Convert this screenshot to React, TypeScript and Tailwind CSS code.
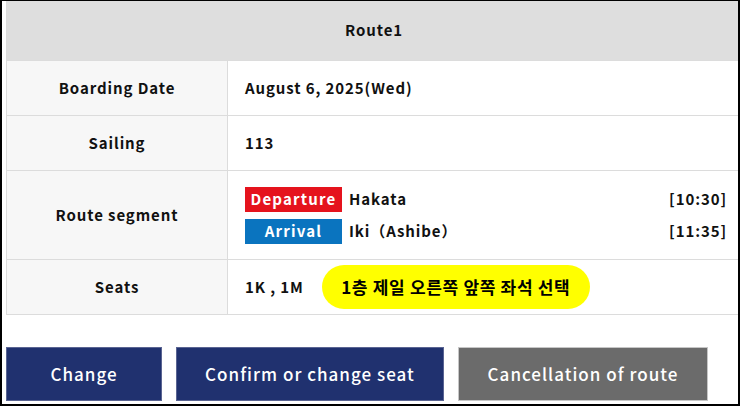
import React from "react";

const rows = [
  { label: "Boarding Date", value: "August 6, 2025(Wed)" },
  { label: "Sailing", value: "113" },
];

function Badge({ text, color }: { text: string; color: string }) {
  return (
    <span
      className={`inline-flex h-[25px] w-[97px] items-center justify-center text-[15px] font-bold tracking-[0.08em] text-white ${color}`}
    >
      {text}
    </span>
  );
}

export default function App() {
  return (
    <div
      className="h-[406px] w-[740px] overflow-hidden border-t border-b-2 border-l-2 border-r-2 border-black bg-white text-[#111]"
      style={{ fontFamily: '"Noto Sans CJK JP", "Noto Sans", sans-serif' }}
    >
      <div className="ml-[4px] w-[736px] border-x border-b border-[#dcdcdc]">
        <div className="flex h-[59px] items-center justify-center bg-[#dedede] text-[15px] font-bold tracking-[0.06em]">
          Route1
        </div>
        {rows.map((r) => (
          <div key={r.label} className="grid h-[55px] grid-cols-[221px_1fr] border-t border-[#dcdcdc]">
            <div className="flex items-center justify-center border-r border-[#dcdcdc] bg-[#f7f7f7] text-[15px] font-bold tracking-[0.06em]">
              {r.label}
            </div>
            <div className="flex items-center pl-[17px] text-[15px] font-bold tracking-[0.06em]">{r.value}</div>
          </div>
        ))}
        <div className="grid h-[89px] grid-cols-[221px_1fr] border-t border-[#dcdcdc]">
          <div className="flex items-center justify-center border-r border-[#dcdcdc] bg-[#f7f7f7] text-[15px] font-bold tracking-[0.06em]">
            Route segment
          </div>
          <div className="flex flex-col justify-center gap-[7px] pl-[17px] pr-[14px] text-[15px] font-bold tracking-[0.06em]">
            <div className="flex items-center gap-[7px]">
              <Badge text="Departure" color="bg-[#e5131d]" />
              <span className="flex-1">Hakata</span>
              <span>[10:30]</span>
            </div>
            <div className="flex items-center gap-[7px]">
              <Badge text="Arrival" color="bg-[#0a74bf]" />
              <span className="flex-1">Iki（Ashibe）</span>
              <span>[11:35]</span>
            </div>
          </div>
        </div>
        <div className="grid h-[55px] grid-cols-[221px_1fr] border-t border-[#dcdcdc]">
          <div className="flex items-center justify-center border-r border-[#dcdcdc] bg-[#f7f7f7] text-[15px] font-bold tracking-[0.06em]">
            Seats
          </div>
          <div className="flex items-center pl-[17px] text-[15px] font-bold tracking-[0.06em]">
            <span>1K , 1M</span>
            <span
              className="ml-[18px] flex h-[44px] w-[268px] items-center justify-center rounded-[22px] bg-[#ffff00] text-[17px] font-bold tracking-[0.04em] text-black"
              style={{ fontFamily: '"Noto Sans CJK KR", sans-serif' }}
            >
              1층 제일 오른쪽 앞쪽 좌석 선택
            </span>
          </div>
        </div>
      </div>
      <div className="ml-[4px] mt-[32px] flex gap-[14px] text-[17px] font-medium tracking-[0.06em] text-white">
        <button className="h-[54px] w-[156px] border border-[#5a6492] bg-[#20316f]">Change</button>
        <button className="h-[54px] w-[268px] border border-[#5a6492] bg-[#20316f]">Confirm or change seat</button>
        <button className="h-[54px] w-[250px] border border-[#c6c6c6] bg-[#6b6b6b]">Cancellation of route</button>
      </div>
    </div>
  );
}
